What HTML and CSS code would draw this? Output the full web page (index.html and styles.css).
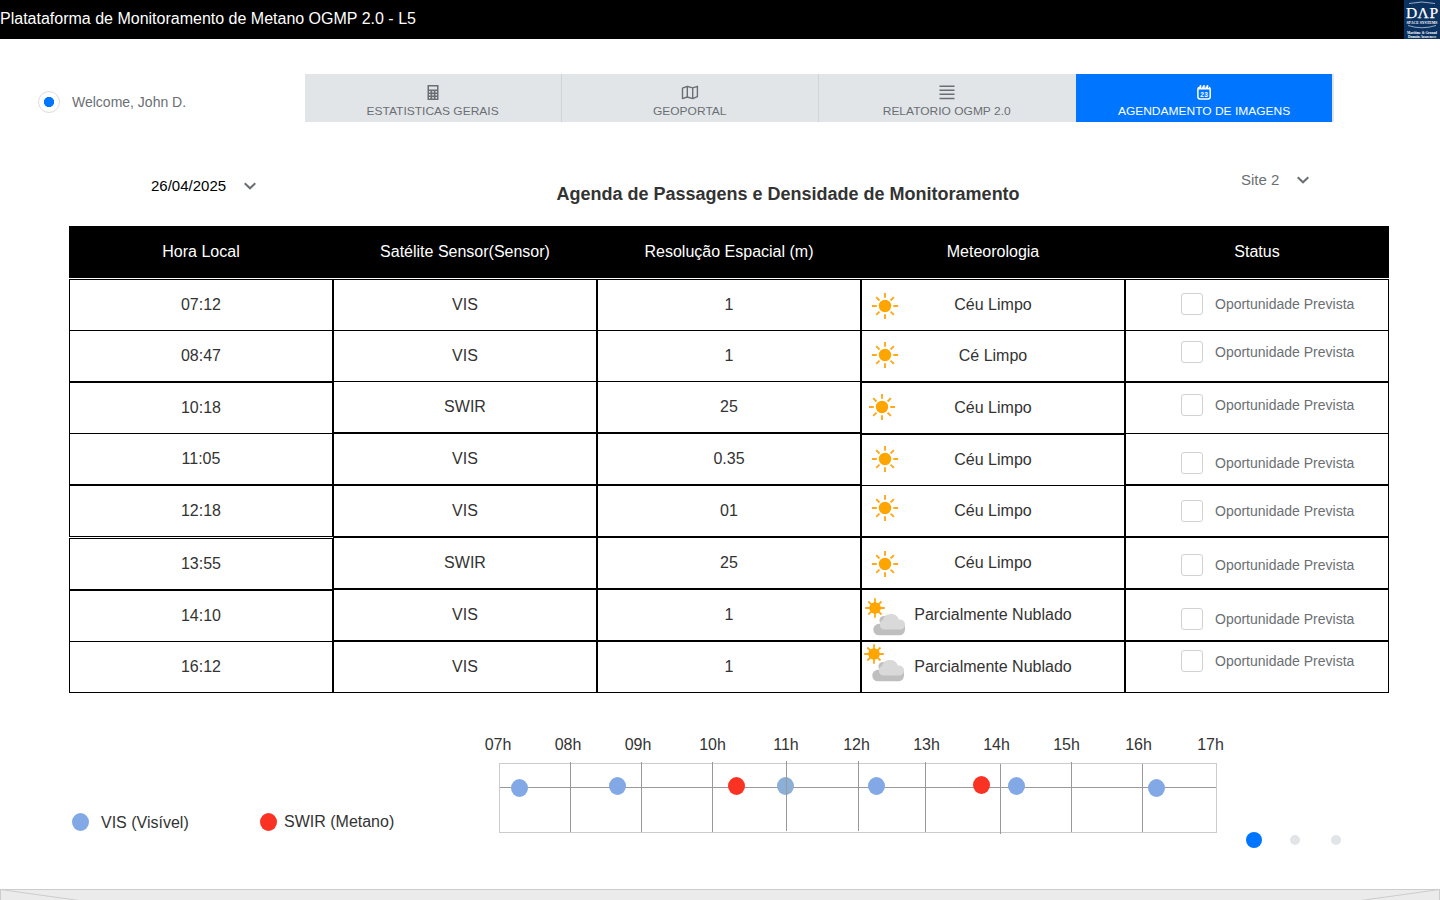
FILE: index.html
```html
<!DOCTYPE html>
<html lang="pt-BR">
<head>
<meta charset="utf-8">
<title>Plataforma de Monitoramento de Metano</title>
<link rel="stylesheet" href="styles.css">
</head>
<body>
<svg class="defs" aria-hidden="true">
  <symbol id="sun" viewBox="0 0 27 27">
    <circle cx="13" cy="13" r="6.200" fill="#ffa500"/>
    <path d="M13 0v4.800M13 21.300v4.800M0 13h4.800M21.300 13h4.800M4.200 4.200l3.300 3.300M18.600 18.600l3.300 3.300M4.200 21.900l3.300-3.300M18.600 7.500l3.300-3.300" stroke="#ffa91a" stroke-width="1.900" fill="none"/>
  </symbol>
  <symbol id="cloudy" viewBox="0 0 42 38">
    <path d="M11 .2v19.600M1.200 10h19.600M4.300 3.500l13.200 13M4.300 16.500l13.200-13" stroke="#ffa91a" stroke-width="1.800" fill="none"/>
    <circle cx="11" cy="10" r="5.800" fill="#ffa500"/>
    <rect x="9.300" y="25.800" width="31.700" height="11.500" rx="5.700" fill="#bfbfbf"/>
    <circle cx="20" cy="22.500" r="4.500" fill="#bfbfbf"/>
    <path d="M34 26h7v6h-7z" fill="#bfbfbf"/>
    <path d="M19.500 31.600a5.200 5.200 0 0 1-.8-9.600 8.600 8.600 0 0 1 16.200-.5c4.300-.3 6.100 2.200 6.100 5s-2.200 5.100-5.200 5.100z" fill="#d9d9d9"/>
  </symbol>
</svg>

<header class="topbar">
  <span>Platataforma de Monitoramento de Metano OGMP 2.0 - L5</span>
  <svg class="logo" width="36" height="39" viewBox="0 0 36 39" font-family="Liberation Serif, serif" fill="#fff" text-anchor="middle">
    <rect width="36" height="39" fill="#0b3161"/>
    <path d="M5 3.500Q18 .5 31 3.500M4 25.500Q18 30 32 25.500" stroke="#b9c8da" stroke-width=".8" fill="none"/>
    <g font-size="15.500" stroke="#fff" stroke-width=".25"><text x="7.500" y="18">D</text><text x="19" y="18">Λ</text><text x="29.800" y="18">P</text></g>
    <text x="18" y="23.500" font-size="4.600" font-weight="bold" textLength="31" lengthAdjust="spacingAndGlyphs">SPACE SYSTEMS</text>
    <text x="18" y="34" font-size="4" font-weight="bold" textLength="30" lengthAdjust="spacingAndGlyphs">Maritime &amp; Ground</text>
    <text x="18" y="37.700" font-size="4" font-weight="bold" textLength="28" lengthAdjust="spacingAndGlyphs">Domain Awareness</text>
  </svg>
</header>

<div class="menu-row">
  <div class="welcome"><span class="radio"></span>Welcome, John D.</div>
  <nav class="tabs">
    <a class="tab">
      <svg width="18" height="18" viewBox="0 0 18 18"><path fill="#6b6f73" fill-rule="evenodd" d="M3.500 1h11v15h-11zM5 2.500v3h8v-3zM5 7v1.500h1.500V7zM8.200 7v1.500h1.600V7zM11.500 7v1.500H13V7zM5 10v1.500h1.500V10zM8.200 10v1.500h1.600V10zM11.500 10v1.500H13V10zM5 13v1.500h1.500V13zM8.200 13v1.500h1.600V13zM11.500 13v1.500H13V13z"/></svg>
      <span>ESTATISTICAS GERAIS</span>
    </a>
    <a class="tab">
      <svg width="18" height="18" viewBox="0 0 18 18" fill="none" stroke="#6b6f73" stroke-width="1.400" stroke-linejoin="round"><path d="M1.500 4.200L6.300 2.300 11.700 3.900 16.400 2.300V12.700L11.700 14.600 6.300 13 1.500 14.600zM6.300 2.300V13M11.700 3.900V14.600"/></svg>
      <span>GEOPORTAL</span>
    </a>
    <a class="tab">
      <svg width="18" height="18" viewBox="0 0 18 18"><path d="M1.500 2.200h15M1.500 6.300h15M1.500 10.300h15M1.500 14.400h15" stroke="#6b6f73" stroke-width="1.500"/></svg>
      <span>RELATORIO OGMP 2.0</span>
    </a>
    <a class="tab active">
      <svg width="18" height="18" viewBox="0 0 18 18"><rect x="2.900" y="3.200" width="12.300" height="11.800" rx="2.200" fill="none" stroke="#fff" stroke-width="1.500"/><path d="M3 3.200h12v2.300H3z" fill="#fff"/><path d="M5.500 1v3M9 1v3M12.500 1v3" stroke="#fff" stroke-width="1.500"/><path d="M6.700 2.300v1.800M10.200 2.300v1.800M13.500 2.300v1.800" stroke="#0075ff" stroke-width=".7"/><text x="9.100" y="12.500" font-family="Liberation Sans, sans-serif" font-size="6.500" font-weight="bold" fill="#fff" text-anchor="middle" textLength="7.500">23</text></svg>
      <span>AGENDAMENTO DE IMAGENS</span>
    </a>
  </nav>
</div>

<div class="filters">
  <div class="select date">26/04/2025<svg width="14" height="10" viewBox="0 0 14 10"><path d="M1.700 2.200L7 7.300l5.300-5.100" fill="none" stroke="#6b6f73" stroke-width="2"/></svg></div>
  <h1>Agenda de Passagens e Densidade de Monitoramento</h1>
  <div class="select site">Site 2<svg width="14" height="10" viewBox="0 0 14 10"><path d="M1.700 2.200L7 7.300l5.300-5.100" fill="none" stroke="#6b6f73" stroke-width="2"/></svg></div>
</div>

<main class="schedule">
  <div class="head">
    <div>Hora Local</div><div>Satélite Sensor(Sensor)</div><div>Resolução Espacial (m)</div><div>Meteorologia</div><div>Status</div>
  </div>
  <div class="columns">
    <div class="col">
      <div class="cell">07:12</div>
      <div class="cell lap">08:47</div>
      <div class="cell">10:18</div>
      <div class="cell lap">11:05</div>
      <div class="cell">12:18</div>
      <div class="cell apart">13:55</div>
      <div class="cell">14:10</div>
      <div class="cell lap">16:12</div>
    </div>
    <div class="col">
      <div class="cell">VIS</div>
      <div class="cell lap">VIS</div>
      <div class="cell lap">SWIR</div>
      <div class="cell">VIS</div>
      <div class="cell">VIS</div>
      <div class="cell">SWIR</div>
      <div class="cell">VIS</div>
      <div class="cell">VIS</div>
    </div>
    <div class="col">
      <div class="cell">1</div>
      <div class="cell lap">1</div>
      <div class="cell lap">25</div>
      <div class="cell">0.35</div>
      <div class="cell">01</div>
      <div class="cell">25</div>
      <div class="cell">1</div>
      <div class="cell">1</div>
    </div>
    <div class="col weather">
      <div class="cell"><svg class="sun s1"><use href="#sun"/></svg><span>Céu Limpo</span></div>
      <div class="cell lap"><svg class="sun s2"><use href="#sun"/></svg><span>Cé Limpo</span></div>
      <div class="cell"><svg class="sun s3"><use href="#sun"/></svg><span>Céu Limpo</span></div>
      <div class="cell"><svg class="sun s4"><use href="#sun"/></svg><span>Céu Limpo</span></div>
      <div class="cell lap"><svg class="sun s5"><use href="#sun"/></svg><span>Céu Limpo</span></div>
      <div class="cell"><svg class="sun s6"><use href="#sun"/></svg><span>Céu Limpo</span></div>
      <div class="cell"><svg class="cloudy s7"><use href="#cloudy"/></svg><span>Parcialmente Nublado</span></div>
      <div class="cell"><svg class="cloudy s8"><use href="#cloudy"/></svg><span>Parcialmente Nublado</span></div>
    </div>
    <div class="col status">
      <div class="cell c1"><i></i>Oportunidade Prevista</div>
      <div class="cell lap c2"><i></i>Oportunidade Prevista</div>
      <div class="cell c3"><i></i>Oportunidade Prevista</div>
      <div class="cell lap c4"><i></i>Oportunidade Prevista</div>
      <div class="cell c5"><i></i>Oportunidade Prevista</div>
      <div class="cell c6"><i></i>Oportunidade Prevista</div>
      <div class="cell c7"><i></i>Oportunidade Prevista</div>
      <div class="cell c8"><i></i>Oportunidade Prevista</div>
    </div>
  </div>
</main>

<section class="bottom">
  <div class="legend">
    <div class="key vis"><svg width="17" height="18"><ellipse cx="8.500" cy="9" rx="8.500" ry="9"/></svg><span>VIS (Visível)</span></div>
    <div class="key swir"><svg width="17" height="18"><ellipse cx="8.500" cy="9" rx="8.500" ry="9"/></svg><span>SWIR (Metano)</span></div>
  </div>
  <svg class="timeline" width="760" height="105" viewBox="480 733 760 105">
    <g class="hours">
      <text x="498" y="750">07h</text><text x="568" y="750">08h</text><text x="638" y="750">09h</text><text x="712.500" y="750">10h</text><text x="786" y="750">11h</text><text x="856.500" y="750">12h</text><text x="926.500" y="750">13h</text><text x="996.500" y="750">14h</text><text x="1066.500" y="750">15h</text><text x="1138.500" y="750">16h</text><text x="1210.500" y="750">17h</text>
    </g>
    <rect class="frame" x="499.500" y="763.500" width="717" height="69"/>
    <path class="rule" d="M500 787.500H1216M570.500 762V832M641.500 762V832M712.500 762V832M858.500 761V831M925.500 762V832M1000.500 764V834M1071.500 762V832M1142.500 764V832"/>
    <g class="vis">
      <ellipse cx="519.500" cy="788" rx="8.500" ry="9"/><ellipse cx="617.500" cy="786" rx="8.500" ry="9"/><ellipse class="mixed" cx="785.500" cy="786" rx="8.500" ry="9"/><ellipse cx="876.500" cy="786" rx="8.500" ry="9"/><ellipse cx="1016.500" cy="786" rx="8.500" ry="9"/><ellipse cx="1156.500" cy="788" rx="8.500" ry="9"/>
    </g>
    <g class="swir"><ellipse cx="736.500" cy="786" rx="8.500" ry="9"/><ellipse cx="981.500" cy="785" rx="8.500" ry="9"/></g>
    <path class="rule" d="M786.500 761V831"/>
  </svg>
  <div class="pager"><b></b><i></i><i></i></div>
</section>

<footer>
  <svg width="1440" height="202" viewBox="0 0 1440 202"><rect x=".5" y=".5" width="1439" height="201" fill="#ebebeb" stroke="#ccc"/><path d="M.5 .5L1439.500 201.500M1439.500 .5L.5 201.500" stroke="#ccc"/></svg>
</footer>
</body>
</html>
```
FILE: styles.css
```css
* { box-sizing: border-box; }
body {
  margin: 0;
  height: 900px;
  overflow: hidden;
  display: flex;
  flex-direction: column;
  background: #fff;
  font: 16px/20px "Liberation Sans", Arial, sans-serif;
  color: #333;
}
svg { display: block; flex: none; }
.defs { width: 0; height: 0; position: absolute; }

.topbar {
  height: 39px;
  flex: none;
  display: flex;
  justify-content: space-between;
  background: #000;
  color: #fff;
}
.topbar span { padding-top: 9px; }

.menu-row { display: flex; flex: none; height: 83px; padding: 35px 0 0 38px; }
.welcome {
  display: flex;
  align-items: center;
  gap: 12px;
  width: 267px;
  height: 22px;
  margin-top: 17px;
  font-size: 14px;
  color: #6b6f73;
}
.radio {
  width: 22px;
  height: 22px;
  border: 1px solid #ddd;
  border-radius: 50%;
  background: radial-gradient(circle, #0075ff 4.800px, #fff 5.400px);
}
.tabs { display: flex; width: 1029px; height: 48px; background: #e1e5e8; }
.tab {
  width: 257px;
  border-right: 1px solid #ced4da;
  display: flex;
  flex-direction: column;
  align-items: center;
  padding-top: 10px;
  font-size: 11px;
  line-height: 14px;
  color: #6b6f73;
  white-space: nowrap;
}
.tab span { margin-top: 2px; transform: scaleX(1.09); }
.tab:nth-child(3) { border-color: #e1e5e8; }
.tab.active { color: #fff; background: #0075ff padding-box; border-color: #e1e5e8; }

.filters { display: flex; flex: none; height: 104px; padding-left: 151px; }
.select { display: flex; align-items: center; height: 20px; font-size: 15px; }
.date { width: 405.5px; margin-top: 54px; gap: 17px; color: #000; }
h1 { margin: 62px 0 0; width: 684.5px; font-size: 18px; line-height: 20px; }
.site { margin-top: 48px; gap: 17px; color: #6b6f73; }

.schedule { flex: none; width: 1320px; margin-left: 69px; }
.head {
  display: grid;
  grid-template-columns: repeat(5, 1fr);
  height: 52px;
  align-items: center;
  text-align: center;
  background: #000;
  color: #fff;
}
.columns { display: grid; grid-template-columns: repeat(5, 1fr); height: 414px; margin-top: 1px; }
.cell {
  display: flex;
  align-items: center;
  justify-content: center;
  height: 52px;
  border: 1px solid #000;
}
.lap { margin-top: -1px; }
.apart { margin-top: 1px; }

.weather .cell { display: grid; grid-template-columns: 100%; align-items: start; }
.weather .cell > * { grid-area: 1 / 1; }
.weather span { text-align: center; align-self: center; }
.sun { width: 27px; height: 27px; margin-left: 10px; }
.cloudy { width: 42px; height: 38px; margin-left: 2px; }
.s1 { margin-top: 13px; }
.s2 { margin-top: 11px; }
.s3 { margin: 11px 0 0 7px; }
.s4 { margin-top: 11px; }
.s5 { margin-top: 9px; }
.s6 { margin-top: 13px; }
.s7 { margin-top: 8px; }
.s8 { margin: 2px 0 0 1px; }

.status .cell {
  align-items: flex-start;
  justify-content: flex-start;
  gap: 12px;
  padding-left: 55px;
  font-size: 14px;
  line-height: 22px;
  color: #6b6f73;
}
.status i { width: 22px; height: 22px; border: 1px solid #d2d2d2; border-radius: 3px; }
.status .c1 { padding-top: 13px; }
.status .c2 { padding-top: 10px; }
.status .c3 { padding-top: 11px; }
.status .c4 { padding-top: 18px; }
.status .c5 { padding-top: 14px; }
.status .c6 { padding-top: 16px; }
.status .c7 { padding-top: 18px; }
.status .c8 { padding-top: 8px; }

.bottom { display: flex; flex: none; height: 196px; padding-top: 40px; }
.legend { display: flex; width: 480px; padding: 79px 0 0 72px; }
.key { display: flex; height: 20px; align-items: center; }
.key.vis { width: 188px; gap: 12px; }
.key.vis span { padding-top: 2px; }
.key.swir { gap: 7px; }
.vis ellipse { fill: #82a9e6; }
.vis .mixed { fill: #8bafd6; }
.swir ellipse { fill: #fa3224; }
.hours text { font-size: 16px; fill: #333; text-anchor: middle; }
.frame { fill: none; stroke: #ccc; }
.rule { fill: none; stroke: #999; }
.pager { display: flex; align-items: center; height: 16px; margin: 99px 0 0 6px; }
.pager b { width: 16px; height: 16px; border-radius: 50%; background: #0075ff; margin-right: 28px; }
.pager i { width: 10px; height: 10px; border-radius: 50%; background: #e1e5e8; margin-right: 31px; }

footer { flex: none; height: 11px; overflow: hidden; }
```
